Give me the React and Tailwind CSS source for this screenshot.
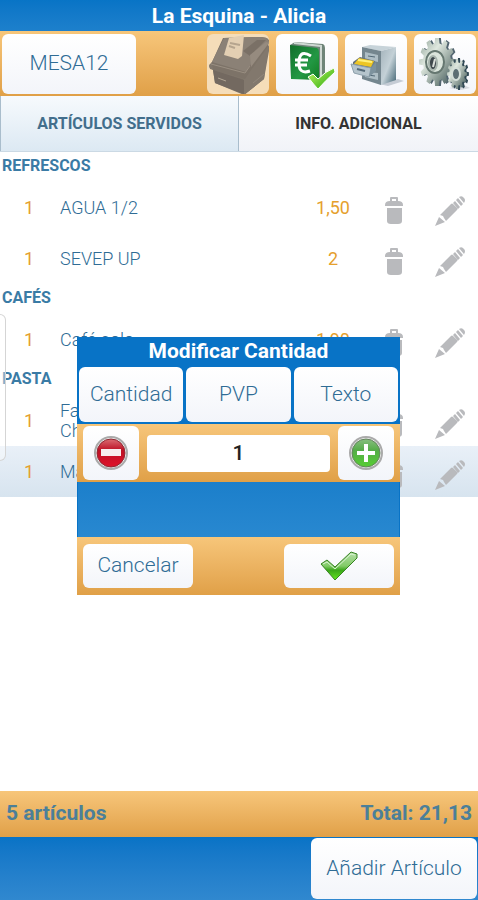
import { useState } from 'react';
import clsx from 'clsx';

const GROUPS = [
  {
    name: 'REFRESCOS',
    items: [
      { id: 1, qty: 1, name: 'AGUA 1/2', price: '1,50' },
      { id: 2, qty: 1, name: 'SEVEP UP', price: '2' },
    ],
  },
  { name: 'CAFÉS', items: [{ id: 3, qty: 1, name: 'Café solo', price: '1,90' }] },
  {
    name: 'PASTA',
    items: [
      { id: 4, qty: 1, name: 'Fa\nCh', price: '' },
      { id: 5, qty: 1, name: 'Ma', price: '' },
    ],
  },
];

const ORANGE = 'bg-linear-to-b from-[#f7c67a] to-[#e0a047]';
const TILE = 'rounded-md bg-linear-to-b from-white to-[#f3f5fa] flex items-center justify-center';
const TILE_TEXT = 'text-[21px] font-light text-[#2f6c95]';

function gearPath(cx, cy, rx, ry, teeth) {
  const points = [];
  for (let i = 0; i < teeth; i++) {
    [[-0.34, 0.78], [-0.2, 1], [0.2, 1], [0.34, 0.78]].forEach(([offset, r]) => {
      const a = ((i + offset) / teeth) * Math.PI * 2;
      points.push(`${(cx + Math.cos(a) * rx * r).toFixed(1)} ${(cy + Math.sin(a) * ry * r).toFixed(1)}`);
    });
  }
  return `M${points.join('L')}Z`;
}

const PrinterIcon = () => (
  <svg viewBox="0 0 62 60" className="w-full h-full" aria-hidden="true">
    <path d="M16 4L53 3Q60 3 62 6L57 45L37 61L8 49L6 36L2 33L5 28Z" fill="#7d7368" />
    <path d="M17 4L5 28L39 38L51 19L62 8L60 4L53 3Z" fill="#8b8176" />
    <path d="M36 17L50 6L59 6L43 22Z" fill="#7a7066" />
    <path d="M43 21L59 8L62 9L44 33Z" fill="#968b7f" />
    <path d="M5 28L2 31L3 35L38 45L42 39L62 11L62 17L57 45L37 61L36 45L6 36Z" fill="#82786d" />
    <path d="M4 30L38 39L43 32" fill="none" stroke="#9a8f82" strokeWidth="1" />
    <path d="M6 36L37 46L37 60L8 49Z" fill="#736960" />
    <path d="M22 4L37 1L35 22L31 25L17 21Z" fill="#e3cfb3" />
    <path d="M23 9L33 11M22 12L28 14" stroke="#b5a48e" strokeWidth="2" />
    <path d="M11 44L19 47" stroke="#b1a594" strokeWidth="1" />
    <path d="M46 49L57 40" stroke="#91877b" strokeWidth="1" />
  </svg>
);

const EuroIcon = () => (
  <svg viewBox="0 0 62 60" className="w-full h-full" aria-hidden="true">
    <defs>
      <linearGradient id="book" x1="0" y1="0" x2="1" y2="1">
        <stop offset="0" stopColor="#116e2a" />
        <stop offset="0.6" stopColor="#239844" />
        <stop offset="1" stopColor="#137d22" />
      </linearGradient>
      <linearGradient id="tick" x1="0" y1="0" x2="1" y2="1">
        <stop offset="0" stopColor="#c4f665" />
        <stop offset="1" stopColor="#22a70b" />
      </linearGradient>
    </defs>
    <path d="M14 11L19 8L47 10Q49 11 49 14V40L43 46L15 44Z" fill="#6f8579" />
    <path d="M18 9L45 12V44" fill="none" stroke="#cfd8d3" strokeWidth="2" />
    <path d="M14 11L41 14Q43 15 43 18V46L15 45Z" fill="url(#book)" />
    <path d="M35 22Q24 15 23 27Q22 41 34 37M19 26H32M19 31H31" fill="none" stroke="#fff" strokeWidth="3" />
    <path d="M32 43L37 40L42 45Q50 37 58 34L59 38Q50 46 42 55Q38 51 32 43Z" fill="url(#tick)" stroke="#fff" strokeWidth="1" />
  </svg>
);

const CabinetIcon = () => (
  <svg viewBox="0 0 62 60" className="w-full h-full" aria-hidden="true">
    <defs>
      <linearGradient id="side" x1="0" y1="0" x2="1" y2="1">
        <stop offset="0" stopColor="#a5b4bc" />
        <stop offset="0.5" stopColor="#c4d1d7" />
        <stop offset="1" stopColor="#426574" />
      </linearGradient>
    </defs>
    <path d="M34 50L53 45L59 47L43 52Z" fill="#c5ccd5" />
    <path d="M17 13L25 11L51 13L36 17Z" fill="#c7d3d9" />
    <path d="M17 13L36 17V51L17 45Z" fill="#74868f" />
    <path d="M36 17L51 13V46L36 51Z" fill="url(#side)" />
    <path d="M20 18L33 21V28L20 25ZM20 38L33 39V46L20 43Z" fill="#adbdc5" />
    <path d="M23 22L30 23M23 41L30 42" stroke="#526876" strokeWidth="1" />
    <path d="M8 28L15 23L30 27L25 34L8 32Z" fill="#657178" />
    <path d="M9 30L14 24L29 27L26 33Z" fill="#edc524" />
    <path d="M13 26L27 28" stroke="#fff17c" strokeWidth="2" />
    <path d="M6 30L26 34L24 43L9 39Z" fill="#b5c4cc" stroke="#8da0ab" />
    <path d="M12 35L20 37" stroke="#536876" strokeWidth="2" />
    <path d="M26 34L31 28V37L24 43Z" fill="#7d929e" />
  </svg>
);

const GearsIcon = () => (
  <svg viewBox="0 0 62 60" className="w-full h-full" aria-hidden="true">
    <defs>
      <linearGradient id="steel" x1="0" y1="0" x2="1" y2="1">
        <stop offset="0" stopColor="#8da096" />
        <stop offset="0.35" stopColor="#dfe8df" />
        <stop offset="0.7" stopColor="#83948e" />
        <stop offset="1" stopColor="#344b55" />
      </linearGradient>
    </defs>
    <path d="M35 54L50 51L56 54L47 56Z" fill="#d6d9df" />
    <path d={gearPath(25, 28, 18, 24, 12)} fill="#526570" />
    <path d={gearPath(23, 28, 18, 24, 12)} fill="url(#steel)" />
    <ellipse cx="21" cy="28" rx="9" ry="11" fill="#dbe5dc" stroke="#657770" strokeWidth="2" />
    <ellipse cx="19" cy="29" rx="4" ry="7" fill="#3e484c" stroke="#a6b3ac" strokeWidth="2" />
    <path d="M19 33L21 25" stroke="#d9ded9" strokeWidth="2" />
    <path d={gearPath(45, 40, 10, 16, 12)} fill="#314955" />
    <path d={gearPath(43, 40, 10, 15, 12)} fill="url(#steel)" />
    <ellipse cx="42" cy="40" rx="4" ry="6" fill="#5c6e73" stroke="#d4ded8" strokeWidth="2" />
  </svg>
);

const TrashIcon = () => (
  <svg viewBox="0 0 20 28" className="w-5 h-7 fill-[#b9babd]" aria-hidden="true">
    <path d="M6 5V2Q6 1 7 1H13Q14 1 14 2V5H12V3H8V5Z" />
    <path d="M1 9Q1 5 6 5H14Q19 5 19 9V10H1ZM3 12H18V25Q18 28 14 28H7Q3 28 3 25Z" />
  </svg>
);

const PencilIcon = () => (
  <svg viewBox="0 0 30 30" className="w-[30px] h-[30px] fill-[#b9babd]" aria-hidden="true">
    <path d="M0 30L4 21L10 26ZM5 19L16 8Q17 7 18 8L22 12Q23 13 22 14L12 24L11 25L9 22L8 20ZM18 7L20 5L25 11L23 13ZM21 4L23 2L28 8L26 10ZM24 1Q27-1 29 2Q31 4 29 7Z" />
  </svg>
);

const RoundIcon = ({ plus }) => (
  <svg viewBox="0 0 36 36" className="w-9 h-9" aria-hidden="true">
    <defs>
      <linearGradient id={plus ? 'green' : 'red'} x1="0" y1="0" x2="0" y2="1">
        <stop offset="0" stopColor={plus ? '#87bf80' : '#da6c72'} />
        <stop offset="0.4" stopColor={plus ? '#55ac48' : '#bd1125'} />
        <stop offset="1" stopColor={plus ? '#56ce32' : '#df1229'} />
      </linearGradient>
    </defs>
    <circle cx="18" cy="18" r="16" fill="#f1f1f1" stroke="#aaa" strokeWidth="2" />
    <circle cx="18" cy="18" r="14" fill={plus ? 'url(#green)' : 'url(#red)'} stroke={plus ? '#64835d' : '#8f2933'} />
    {plus
      ? <path d="M16 9H20V16H27V20H20V27H16V20H9V16H16Z" fill="#fff" />
      : <path d="M8 14H28V21H8Z" fill="#f7eeee" />}
  </svg>
);

const CheckIcon = () => (
  <svg viewBox="0 0 38 30" className="w-[38px] h-[30px]" aria-hidden="true">
    <defs>
      <linearGradient id="check" x1="0" y1="0" x2="0" y2="1">
        <stop offset="0" stopColor="#b6dfaa" />
        <stop offset="0.5" stopColor="#82cb67" />
        <stop offset="0.65" stopColor="#3ba719" />
        <stop offset="1" stopColor="#63e51f" />
      </linearGradient>
    </defs>
    <path d="M1 13L7 9L15 16L31 1L37 3V7L15 29Z" fill="url(#check)" stroke="#378322" strokeWidth="1" strokeLinejoin="round" />
    <path d="M3 13L7 11L15 18L31 3L35 4" fill="none" stroke="#d9f4d0" strokeWidth="1" />
  </svg>
);

const TOOLS = [
  { label: 'Imprimir', icon: PrinterIcon, muted: true },
  { label: 'Cobrar', icon: EuroIcon },
  { label: 'Abrir cajón', icon: CabinetIcon },
  { label: 'Ajustes', icon: GearsIcon },
];

function ItemRow({ item, selected }) {
  return (
    <li className={clsx(
      'h-[51px] flex items-center text-lg font-light text-[#2f6c95]',
      selected && 'bg-linear-to-b from-[#e9f0f8] to-[#d7e4ef]'
    )}>
      <span className="w-[58px] mr-0.5 text-center font-normal text-[#e5a02d]">{item.qty}</span>
      <span className="flex-1 whitespace-pre-line leading-5">{item.name}</span>
      <span className="w-[90px] text-center font-normal text-[#e5a02d]">{item.price}</span>
      <button aria-label="Eliminar" className="w-8 pt-1 flex justify-center">
        <TrashIcon />
      </button>
      <button aria-label="Editar" className="ml-[25px] mr-[13px] pt-1.5">
        <PencilIcon />
      </button>
    </li>
  );
}

function QuantityDialog() {
  const [value, setValue] = useState('1');
  const step = (n) => setValue(String(Math.max(0, Number(value) + n)));

  return (
    <div className="fixed inset-0 pt-8 pr-px flex items-center justify-center">
      <section role="dialog" aria-labelledby="dialog-title" className="w-[323px] bg-[#0873c6]">
        <h2 id="dialog-title" className="h-[29px] text-center text-[21px] leading-[29px] font-bold text-white">
          Modificar Cantidad
        </h2>
        <div className={clsx('grid grid-cols-3 gap-[3px] px-0.5 pt-px pb-0.5', TILE_TEXT)}>
          {['Cantidad', 'PVP', 'Texto'].map((label) => (
            <button key={label} className={clsx(TILE, 'h-[55px]')}>{label}</button>
          ))}
        </div>
        <div className={clsx('h-[58px] px-1.5 flex items-center gap-2', ORANGE)}>
          <button aria-label="Restar" onClick={() => step(-1)} className={clsx(TILE, 'w-14 h-[54px]')}>
            <RoundIcon />
          </button>
          <input
            aria-label="Cantidad"
            value={value}
            onChange={(e) => setValue(e.target.value)}
            className="flex-1 min-w-0 h-[37px] rounded-sm bg-white text-center text-[21px] font-medium text-[#222]"
          />
          <button aria-label="Sumar" onClick={() => step(1)} className={clsx(TILE, 'w-14 h-[54px]')}>
            <RoundIcon plus />
          </button>
        </div>
        <div className="h-[55px] border-x border-[#0873c6] bg-linear-to-b from-[#1b7fcb] to-[#2888d0]" />
        <div className={clsx('h-[58px] px-1.5 flex items-center justify-between', ORANGE)}>
          <button className={clsx(TILE, TILE_TEXT, 'w-[110px] h-11')}>Cancelar</button>
          <button aria-label="Aceptar" className={clsx(TILE, 'w-[110px] h-11')}>
            <CheckIcon />
          </button>
        </div>
      </section>
    </div>
  );
}

export default function App() {
  return (
    <div className="relative min-h-screen flex flex-col bg-white font-['Roboto',sans-serif]">
      <header>
        <h1 className="h-[31px] text-center text-[21px] leading-8 font-bold text-white bg-linear-to-b from-[#0874c6] to-[#1d80cc]">
          La Esquina - Alicia
        </h1>
        <div className={clsx('h-[65px] px-0.5 flex items-center gap-[7px]', ORANGE)}>
          <button className={clsx(TILE, TILE_TEXT, 'w-[134px] h-[60px] mr-auto')}>MESA12</button>
          {TOOLS.map(({ label, icon: Icon, muted }) => (
            <button
              key={label}
              aria-label={label}
              className={clsx('w-[62px] h-[60px] rounded-md overflow-hidden', muted ? 'bg-[#f5ddb9]' : 'bg-linear-to-b from-white to-[#f3f5fa]')}
            >
              <Icon />
            </button>
          ))}
        </div>
        <nav className="h-14 grid grid-cols-2 border-b border-[#cbd9e4] text-base font-bold">
          <button className="border-x border-[#a9bdcc] text-[#426e8c] bg-linear-to-b from-[#f7fafd] to-[#dce9f3]">
            ARTÍCULOS SERVIDOS
          </button>
          <button className="text-[#333] bg-linear-to-b from-white to-[#f1f3f8]">INFO. ADICIONAL</button>
        </nav>
      </header>

      <main className="flex-1">
        {GROUPS.map((group) => (
          <section key={group.name}>
            <h2 className="h-[30px] pl-0.5 text-base leading-7 font-bold text-[#3a7ba5]">{group.name}</h2>
            <ul>
              {group.items.map((item) => (
                <ItemRow key={item.id} item={item} selected={item.id === 5} />
              ))}
            </ul>
          </section>
        ))}
      </main>

      {/* Side drawer handle */}
      <div className="absolute left-0 top-[314px] w-1.5 h-[147px] rounded-r-md border border-l-0 border-[#d5d5d5] bg-white/40" />

      <footer>
        <div className={clsx('h-[46px] px-1.5 flex items-center justify-between text-[21px] font-bold text-[#4b7f99]', ORANGE)}>
          <span>5 artículos</span>
          <span>Total: 21,13</span>
        </div>
        <div className="h-[63px] px-px pt-px flex justify-end items-start bg-linear-to-b from-[#0873c6] to-[#3088cf]">
          <button className={clsx(TILE, TILE_TEXT, 'w-[166px] h-[61px]')}>Añadir Artículo</button>
        </div>
      </footer>

      <QuantityDialog />
    </div>
  );
}
